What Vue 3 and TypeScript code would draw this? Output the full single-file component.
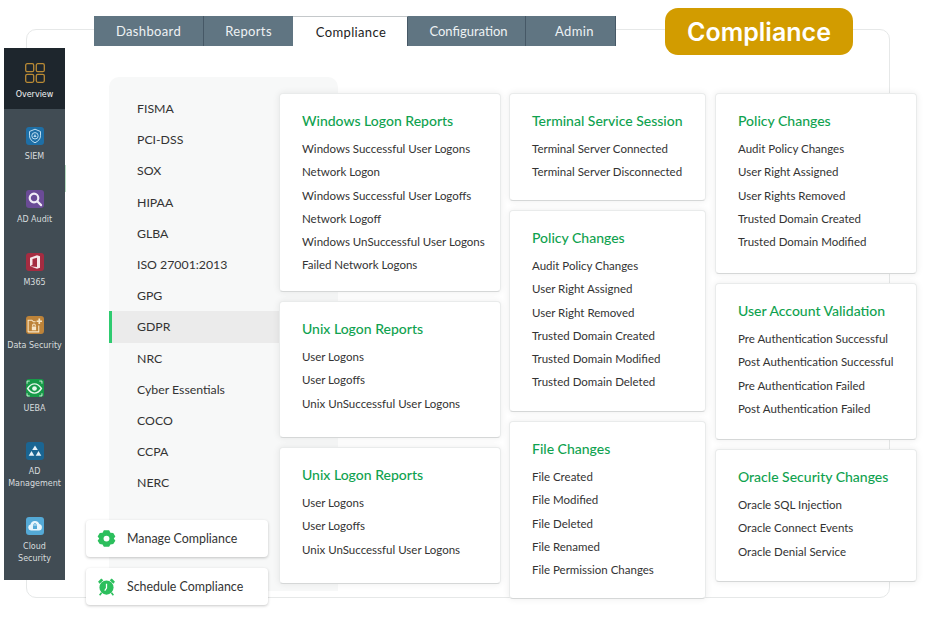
<script setup lang="ts">
interface Card {
  title: string
  height: number
  items: string[]
}

const tabs = ['Dashboard', 'Reports', 'Compliance', 'Configuration', 'Admin']
const activeTab = 'Compliance'

const sideItems = [
  { key: 'siem', label: 'SIEM' },
  { key: 'audit', label: 'AD Audit' },
  { key: 'm365', label: 'M365' },
  { key: 'data', label: 'Data Security' },
  { key: 'ueba', label: 'UEBA' },
  { key: 'adm', label: 'AD Management' },
  { key: 'cloud', label: 'Cloud Security' }
]

const standards = [
  'FISMA', 'PCI-DSS', 'SOX', 'HIPAA', 'GLBA', 'ISO 27001:2013', 'GPG',
  'GDPR', 'NRC', 'Cyber Essentials', 'COCO', 'CCPA', 'NERC'
]

const unixLogon: string[] = ['User Logons', 'User Logoffs', 'Unix UnSuccessful User Logons']

const columns: { width: number; cards: Card[] }[] = [
  {
    width: 222,
    cards: [
      {
        title: 'Windows Logon Reports',
        height: 199,
        items: [
          'Windows Successful User Logons',
          'Network Logon',
          'Windows Successful User Logoffs',
          'Network Logoff',
          'Windows UnSuccessful User Logons',
          'Failed Network Logons'
        ]
      },
      { title: 'Unix Logon Reports', height: 137, items: unixLogon },
      { title: 'Unix Logon Reports', height: 137, items: unixLogon }
    ]
  },
  {
    width: 197,
    cards: [
      {
        title: 'Terminal Service Session',
        height: 108,
        items: ['Terminal Server Connected', 'Terminal Server Disconnected']
      },
      {
        title: 'Policy Changes',
        height: 202,
        items: [
          'Audit Policy Changes',
          'User Right Assigned',
          'User Right Removed',
          'Trusted Domain Created',
          'Trusted Domain Modified',
          'Trusted Domain Deleted'
        ]
      },
      {
        title: 'File Changes',
        height: 178,
        items: ['File Created', 'File Modified', 'File Deleted', 'File Renamed', 'File Permission Changes']
      }
    ]
  },
  {
    width: 202,
    cards: [
      {
        title: 'Policy Changes',
        height: 181,
        items: [
          'Audit Policy Changes',
          'User Right Assigned',
          'User Rights Removed',
          'Trusted Domain Created',
          'Trusted Domain Modified'
        ]
      },
      {
        title: 'User Account Validation',
        height: 157,
        items: [
          'Pre Authentication Successful',
          'Post Authentication Successful',
          'Pre Authentication Failed',
          'Post Authentication Failed'
        ]
      },
      {
        title: 'Oracle Security Changes',
        height: 133,
        items: ['Oracle SQL Injection', 'Oracle Connect Events', 'Oracle Denial Service']
      }
    ]
  }
]
</script>

<template>
  <div class="page">
    <div class="frame"></div>

    <header class="top">
      <nav class="tabs">
        <div v-for="tab in tabs" :key="tab" class="tab" :class="{ active: tab === activeTab }">{{ tab }}</div>
      </nav>
      <div class="badge">Compliance</div>
    </header>

    <div class="body">
      <aside class="sidebar">
        <div class="side-active">
          <svg width="20" height="20" viewBox="0 0 20 20" fill="none" stroke="#b98a35" stroke-width="1.3">
            <rect x="0.7" y="0.7" width="8" height="8" rx="1.5" />
            <rect x="11.3" y="0.7" width="8" height="8" rx="1.5" />
            <rect x="0.7" y="11.3" width="8" height="8" rx="1.5" />
            <rect x="11.3" y="11.3" width="8" height="8" rx="1.5" />
          </svg>
          <span>Overview</span>
        </div>
        <div v-for="item in sideItems" :key="item.key" class="side-item">
          <span class="side-icon" :class="item.key">
            <svg v-if="item.key === 'siem'" width="16" height="16" viewBox="0 0 16 16" fill="none" stroke="#bcdcf0" stroke-width="1">
              <path d="M8 1.200l5.500 2.300v4.300c0 3.200-2.400 5.500-5.500 7-3.100-1.500-5.500-3.800-5.500-7V3.500z" />
              <circle cx="8" cy="7.800" r="3.200" />
              <path d="M8 6l1.600 2.900H6.400z" fill="#bcdcf0" stroke="none" />
            </svg>
            <svg v-else-if="item.key === 'audit'" width="16" height="16" viewBox="0 0 16 16" fill="none" stroke="#f0ecf6" stroke-width="2.200">
              <circle cx="7" cy="7" r="4.300" />
              <path d="M10.500 10.500l3.600 3.600" stroke-linecap="round" />
            </svg>
            <svg v-else-if="item.key === 'm365'" width="16" height="16" viewBox="0 0 16 16">
              <path d="M3 3.800L10 1.300l3 1v11.400l-3 1-7-2.500 7 .8V3.700L5.500 5v5.800L3 12.200z" fill="#f6e6e9" />
            </svg>
            <svg v-else-if="item.key === 'data'" width="17" height="17" viewBox="0 0 16 16" fill="none" stroke="#f7e7c8" stroke-width="1">
              <path d="M2 14V3h3.500l1.500 1.500h2M12 8v6H2" />
              <rect x="5.500" y="9" width="4" height="3.500" fill="#f7e7c8" stroke="none" />
              <path d="M6.300 9V7.800a1.200 1.200 0 0 1 2.400 0V9" />
              <path d="M12.500 1.500v5M10 4h5" stroke-width="1.600" />
            </svg>
            <svg v-else-if="item.key === 'ueba'" width="17" height="17" viewBox="0 0 16 16" fill="none" stroke="#e7f7ec">
              <path d="M1.500 8c2-3 4-4.300 6.500-4.300S12.500 5 14.500 8c-2 3-4 4.300-6.500 4.300S3.500 11 1.500 8z" stroke-width="1.300" />
              <circle cx="8" cy="8" r="2.200" fill="#e7f7ec" stroke="none" />
              <path d="M1 3.500V1h2.500M12.500 1H15v2.500M1 12.500V15h2.500M12.500 15H15v-2.500" stroke-width="0.800" />
            </svg>
            <svg v-else-if="item.key === 'adm'" width="14" height="14" viewBox="0 0 14 14" fill="#e6f1f8">
              <path d="M7 1.500l2.800 4.500H4.200z" />
              <path d="M3.500 7l2.800 4.800H.7z" />
              <path d="M10.500 7l2.800 4.800H7.700z" />
            </svg>
            <svg v-else width="16" height="16" viewBox="0 0 16 16">
              <path d="M4 12.500a3 3 0 0 1-.5-5.900A4.600 4.600 0 0 1 12.300 6a3.300 3.300 0 0 1-.3 6.500z" fill="#e9f6fc" />
              <rect x="6" y="7.500" width="4" height="3.500" fill="#54a9d6" />
              <path d="M6.800 7.500V6.800a1.200 1.200 0 0 1 2.400 0v.7" fill="none" stroke="#54a9d6" />
            </svg>
          </span>
          <span class="side-label">{{ item.label }}</span>
        </div>
      </aside>

      <main class="content">
        <section class="standards">
          <div v-for="name in standards" :key="name" class="standard" :class="{ current: name === 'GDPR' }">{{ name }}</div>
        </section>

        <section class="columns">
          <div v-for="(col, i) in columns" :key="i" class="column" :style="{ width: col.width + 'px' }">
            <article v-for="card in col.cards" :key="card.title + card.height" class="card" :style="{ height: card.height + 'px' }">
              <h3>{{ card.title }}</h3>
              <ul>
                <li v-for="line in card.items" :key="line">{{ line }}</li>
              </ul>
            </article>
          </div>
        </section>

        <div class="actions">
          <div class="action">
            <svg width="19" height="19" viewBox="0 0 18 18">
              <path fill="#2cbf5d" fill-rule="evenodd" d="M6.500 1.200h5l1.200 2.300 2.700.2 2 3.400-1.500 2 1.500 2-2 3.200-2.700.3-1.200 2.300h-5l-1.200-2.300-2.700-.3-2-3.200 1.500-2-1.500-2 2-3.400 2.700-.2zM9 6.300a2.800 2.800 0 1 0 0 5.600 2.800 2.800 0 0 0 0-5.600z" />
            </svg>
            <span>Manage Compliance</span>
          </div>
          <div class="action schedule">
            <svg width="19" height="19" viewBox="0 0 18 18">
              <circle cx="9" cy="10" r="6.700" fill="#2cbf5d" />
              <path d="M1 4.500L4 1.500 6 3 2.500 6.300zM17 4.500L14 1.500 12 3l3.500 3.300z" fill="#2cbf5d" />
              <path d="M4.300 15l-1.800 2.300M13.700 15l1.800 2.300" stroke="#2cbf5d" stroke-width="1.500" />
              <path d="M9 6.500V10.500L7.300 12.800" fill="none" stroke="#fff" stroke-width="1.200" />
            </svg>
            <span>Schedule Compliance</span>
          </div>
        </div>
      </main>
    </div>
  </div>
</template>

<style scoped>
.page {
  position: relative;
  width: 930px;
  height: 620px;
  overflow: hidden;
  background: #fff;
  font-family: Lato, "Liberation Sans", sans-serif;
}
.frame {
  position: absolute;
  left: 26px;
  top: 29px;
  width: 862px;
  height: 567px;
  border: 1px solid #e6e8e8;
  border-radius: 10px;
  background: #fff;
}
.top {
  position: relative;
  display: flex;
  align-items: flex-start;
  height: 48px;
  padding: 16px 0 0 94px;
  box-sizing: border-box;
}
.tabs {
  display: flex;
  height: 30px;
  background: #fff;
}
.tab {
  display: flex;
  align-items: center;
  justify-content: center;
  box-sizing: border-box;
  height: 30px;
  background: #607582;
  border-right: 1px solid #465866;
  color: #eef2f4;
  font-size: 13px;
  letter-spacing: 0.35px;
}
.tab:nth-child(1) { width: 110px; }
.tab:nth-child(2) { width: 89px; border-right: none; }
.tab:nth-child(3) { width: 115px; padding-left: 2px; }
.tab:nth-child(4) { width: 118px; padding-left: 4px; letter-spacing: 0; }
.tab:nth-child(5) { width: 90px; padding-left: 8px; }
.tab.active {
  background: #fff;
  color: #1d1d1d;
  border-top: 1px solid #c4c8ca;
  border-right: 1px solid #465866;
}
.badge {
  display: flex;
  align-items: center;
  justify-content: center;
  width: 188px;
  height: 47px;
  margin: -8px 0 0 49px;
  border-radius: 13px;
  background: #d29c00;
  color: #fff;
  font-family: Inter, "Liberation Sans", sans-serif;
  font-size: 25px;
  font-weight: 600;
}
.body {
  position: relative;
  display: flex;
  align-items: flex-start;
}
.sidebar {
  position: relative;
  flex: none;
  width: 61px;
  height: 532px;
  margin-left: 4px;
  background: #414c54;
  color: #d8dcde;
  font-family: "DejaVu Sans", sans-serif;
  font-size: 8px;
  text-align: center;
}
.sidebar::after {
  content: "";
  position: absolute;
  left: 61px;
  top: 117px;
  width: 1px;
  height: 27px;
  background: #b7dcc2;
}
.side-active {
  display: flex;
  flex-direction: column;
  align-items: center;
  box-sizing: border-box;
  height: 61px;
  padding-top: 15px;
  background: #1e262d;
  color: #f2f2f2;
}
.side-active span {
  margin-top: 6px;
  line-height: 12px;
}
.side-item {
  display: flex;
  flex-direction: column;
  align-items: center;
  padding: 18px 0 9px;
}
.side-icon {
  display: flex;
  align-items: center;
  justify-content: center;
  width: 18px;
  height: 18px;
  border-radius: 3px;
}
.side-label {
  margin-top: 6px;
  line-height: 12px;
}
.cloud + .side-label {
  width: 40px;
}
.siem { background: #1e6fa6; }
.audit { background: #6a4b96; }
.m365 { background: #a52c41; }
.data { background: #bd8339; }
.ueba { background: #179a48; }
.adm { background: #1a6592; }
.cloud { background: #54a9d6; }

.content {
  position: relative;
  display: flex;
  margin: 29px 0 0 44px;
}
.standards {
  flex: none;
  box-sizing: border-box;
  width: 229px;
  height: 514px;
  margin-right: -59px;
  padding-top: 16px;
  border-radius: 10px 10px 0 0;
  background: #f7f8f8;
}
.standard {
  box-sizing: border-box;
  width: 170px;
  height: 31.200px;
  padding-left: 28px;
  color: #333;
  font-size: 12.300px;
  line-height: 31.200px;
}
.standard.current {
  padding-left: 25px;
  border-left: 3px solid #2ecb70;
  background: #ebebeb;
}
.columns {
  position: relative;
  display: flex;
  gap: 8px;
  margin-top: 16px;
}
.column {
  display: flex;
  flex-direction: column;
  flex: none;
  gap: 9px;
}
.column:nth-child(3) {
  margin-left: 1px;
}
.card {
  box-sizing: border-box;
  padding: 18px 0 0 22px;
  border: 1px solid #e9ebeb;
  border-bottom-color: #d5d7d7;
  border-radius: 4px;
  background: #fff;
  box-shadow: 0 0 7px rgba(0, 0, 0, 0.08);
}
.card h3 {
  margin: 0;
  color: #0fa24f;
  font-size: 14px;
  font-weight: 500;
  line-height: 18px;
}
.card ul {
  margin: 7px 0 0;
  padding: 0;
  list-style: none;
}
.card li {
  height: 23.300px;
  color: #333;
  font-size: 11.500px;
  line-height: 23.300px;
  white-space: nowrap;
}
.actions {
  position: absolute;
  left: -23px;
  top: 443px;
  display: flex;
  flex-direction: column;
  gap: 11px;
}
.action {
  display: flex;
  align-items: center;
  gap: 11px;
  box-sizing: border-box;
  width: 182px;
  height: 37px;
  padding-left: 11px;
  border-radius: 4px;
  background: #fff;
  box-shadow: 0 1px 3px rgba(0, 0, 0, 0.22);
  color: #333;
  font-size: 12.400px;
}
.action.schedule {
  gap: 11px;
}
</style>
